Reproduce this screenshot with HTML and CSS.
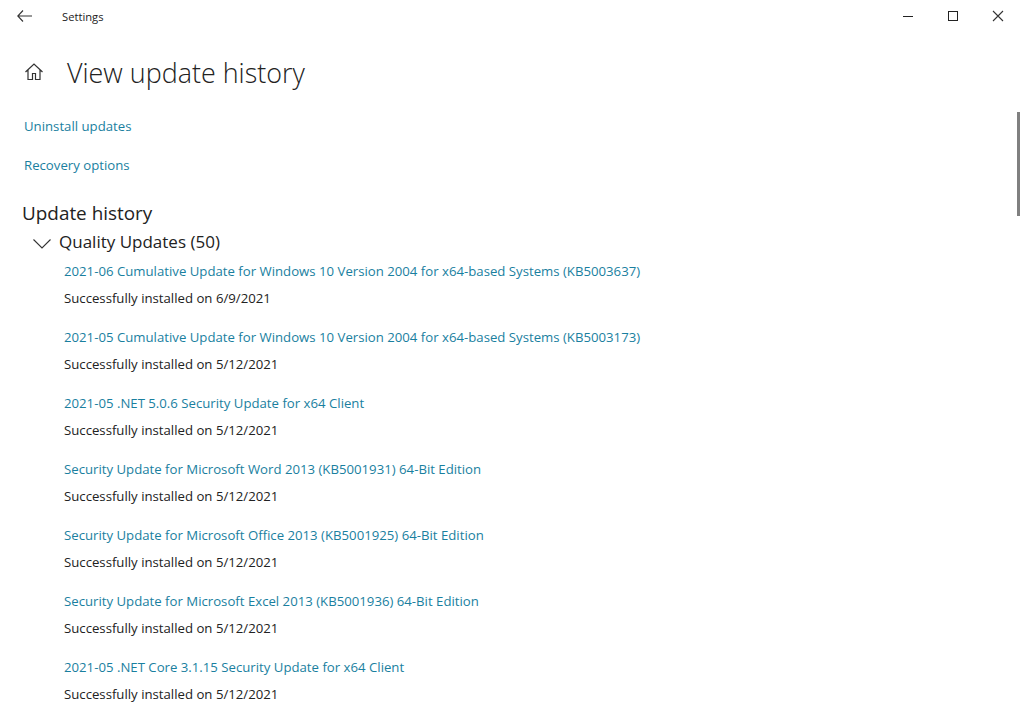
FILE: index.html
```html
<!DOCTYPE html>
<html lang="en">
<head>
    <meta charset="UTF-8">
    <title>Settings</title>
    <link rel="stylesheet" href="styles.css">
</head>
<body>
    <header class="titlebar">
        <svg class="back-icon" width="15" height="12" viewBox="0 0 15 12"><path d="M6 .5.8 6 6 11.500M.8 6H15" fill="none" stroke="#333" stroke-width="1.100"/></svg>
        <span class="app-name">Settings</span>
        <div class="window-buttons">
            <svg width="12" height="12" viewBox="0 0 12 12"><path d="M1 6.5h10" stroke="#222" fill="none"/></svg>
            <svg width="12" height="12" viewBox="0 0 12 12"><rect x="1.5" y="1.5" width="9" height="9" stroke="#222" fill="none"/></svg>
            <svg width="12" height="12" viewBox="0 0 12 12"><path d="M1 1l10 10M11 1 1 11" stroke="#333" stroke-width="1.1" fill="none"/></svg>
        </div>
    </header>

    <main class="content">
        <div class="page-title">
            <svg width="20" height="20" viewBox="0 0 20 20"><path d="M1.500 10 10 2l8.500 8M4 8v9.500h4.500v-6h3v6H16V8" fill="none" stroke="#333" stroke-width="1.200"/></svg>
            <h1>View update history</h1>
        </div>

        <a class="side-link" href="#">Uninstall updates</a>
        <a class="side-link" href="#">Recovery options</a>

        <h2>Update history</h2>
        <div class="group-head">
            <svg class="chevron" width="18" height="10" viewBox="0 0 18 10"><path d="M.5.5 9 9 17.500.5" fill="none" stroke="#333" stroke-width="1.100"/></svg>
            <span>Quality Updates (50)</span>
        </div>

        <ul class="updates">
            <li><a href="#">2021-06 Cumulative Update for Windows 10 Version 2004 for x64-based Systems (KB5003637)</a><p>Successfully installed on 6/9/2021</p></li>
            <li><a href="#">2021-05 Cumulative Update for Windows 10 Version 2004 for x64-based Systems (KB5003173)</a><p>Successfully installed on 5/12/2021</p></li>
            <li><a href="#">2021-05 .NET 5.0.6 Security Update for x64 Client</a><p>Successfully installed on 5/12/2021</p></li>
            <li><a href="#">Security Update for Microsoft Word 2013 (KB5001931) 64-Bit Edition</a><p>Successfully installed on 5/12/2021</p></li>
            <li><a href="#">Security Update for Microsoft Office 2013 (KB5001925) 64-Bit Edition</a><p>Successfully installed on 5/12/2021</p></li>
            <li><a href="#">Security Update for Microsoft Excel 2013 (KB5001936) 64-Bit Edition</a><p>Successfully installed on 5/12/2021</p></li>
            <li><a href="#">2021-05 .NET Core 3.1.15 Security Update for x64 Client</a><p>Successfully installed on 5/12/2021</p></li>
        </ul>
    </main>

    <div class="scroll-thumb"></div>
</body>
</html>
```

FILE: styles.css
```css
html, body {
    height: 100%;
}
body {
    margin: 0;
    background: #fff;
    color: #222;
    font-family: "Open Sans", "Noto Sans", sans-serif;
    overflow: hidden;
}
a {
    color: #1a7f9f;
    text-decoration: none;
}
.titlebar {
    display: flex;
    align-items: center;
    height: 32px;
    padding-left: 17px;
}
.back-icon {
    margin-right: 30px;
}
.app-name {
    font-size: 11.2px;
}
.window-buttons {
    display: flex;
    gap: 33px;
    margin-left: auto;
    margin-right: 18px;
}
.content {
    padding-left: 24px;
}
.page-title {
    display: flex;
    align-items: center;
    gap: 23px;
    height: 50px;
    margin-top: 15px;
}
h1 {
    margin: 0;
    font-size: 26.9px;
    font-weight: 300;
}
.side-link {
    display: block;
    font-size: 13.2px;
    line-height: 20px;
    margin-bottom: 19px;
}
.side-link:first-of-type {
    margin-top: 19px;
}
h2 {
    margin: 25px 0 0 -2px;
    font-size: 18.9px;
    font-weight: 400;
    line-height: 27px;
}
.group-head {
    display: flex;
    align-items: center;
    gap: 8px;
    margin: -1px 0 5px 9px;
    height: 30px;
    font-size: 17px;
}
.chevron {
    margin-top: 5px;
}
.updates {
    list-style: none;
    margin: 0;
    padding: 0 0 0 40px;
}
.updates li {
    height: 66px;
    font-size: 13.2px;
    line-height: 20px;
}
.updates p {
    margin: 7px 0 0;
}
.scroll-thumb {
    position: absolute;
    top: 112px;
    right: 2px;
    width: 3px;
    height: 104px;
    background: #808080;
}
```
